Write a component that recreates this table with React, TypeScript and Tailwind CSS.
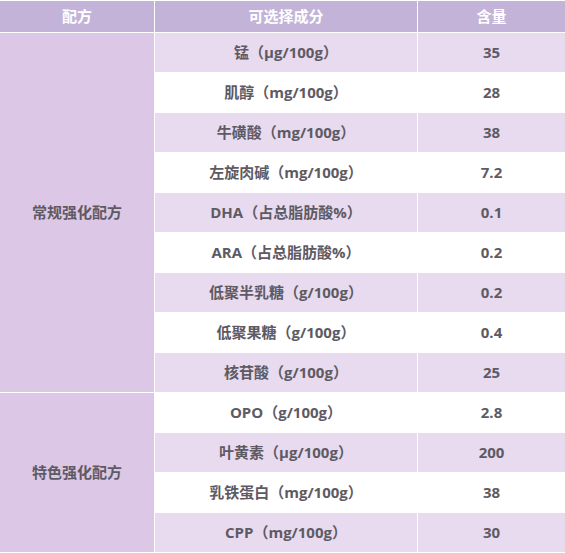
import React from "react";

const rows: { name: string; value: string }[] = [
  { name: "锰（μg/100g）", value: "35" },
  { name: "肌醇（mg/100g）", value: "28" },
  { name: "牛磺酸（mg/100g）", value: "38" },
  { name: "左旋肉碱（mg/100g）", value: "7.2" },
  { name: "DHA（占总脂肪酸%）", value: "0.1" },
  { name: "ARA（占总脂肪酸%）", value: "0.2" },
  { name: "低聚半乳糖（g/100g）", value: "0.2" },
  { name: "低聚果糖（g/100g）", value: "0.4" },
  { name: "核苷酸（g/100g）", value: "25" },
  { name: "OPO（g/100g）", value: "2.8" },
  { name: "叶黄素（μg/100g）", value: "200" },
  { name: "乳铁蛋白（mg/100g）", value: "38" },
  { name: "CPP（mg/100g）", value: "30" },
];

export default function App() {
  return (
    <div
      className="w-[565px] h-[553px] bg-white pt-px overflow-hidden"
      style={{ fontFamily: '"Open Sans", "Noto Sans CJK SC", sans-serif' }}
    >
      <div className="grid grid-cols-[154px_262px_147px] grid-rows-[31px_repeat(13,39px)] gap-px bg-white text-[15px] font-bold text-[#5e5a63]">
        <div className="bg-[#c3b3d9] text-white flex items-center justify-center">配方</div>
        <div className="bg-[#c3b3d9] text-white flex items-center justify-center">可选择成分</div>
        <div className="bg-[#c3b3d9] text-white flex items-center justify-center">含量</div>
        {rows.map((r, i) => (
          <React.Fragment key={i}>
            {i === 0 && (
              <div className="row-span-9 bg-[#dcc7e6] flex items-center justify-center">常规强化配方</div>
            )}
            {i === 9 && (
              <div className="row-span-4 bg-[#dcc7e6] flex items-center justify-center">特色强化配方</div>
            )}
            <div
              className={`${i % 2 === 0 ? "bg-[#e8daef]" : "bg-white"} flex items-center justify-center`}
            >
              {r.name}
            </div>
            <div
              className={`${i % 2 === 0 ? "bg-[#e8daef]" : "bg-white"} flex items-center justify-center`}
            >
              {r.value}
            </div>
          </React.Fragment>
        ))}
      </div>
    </div>
  );
}
